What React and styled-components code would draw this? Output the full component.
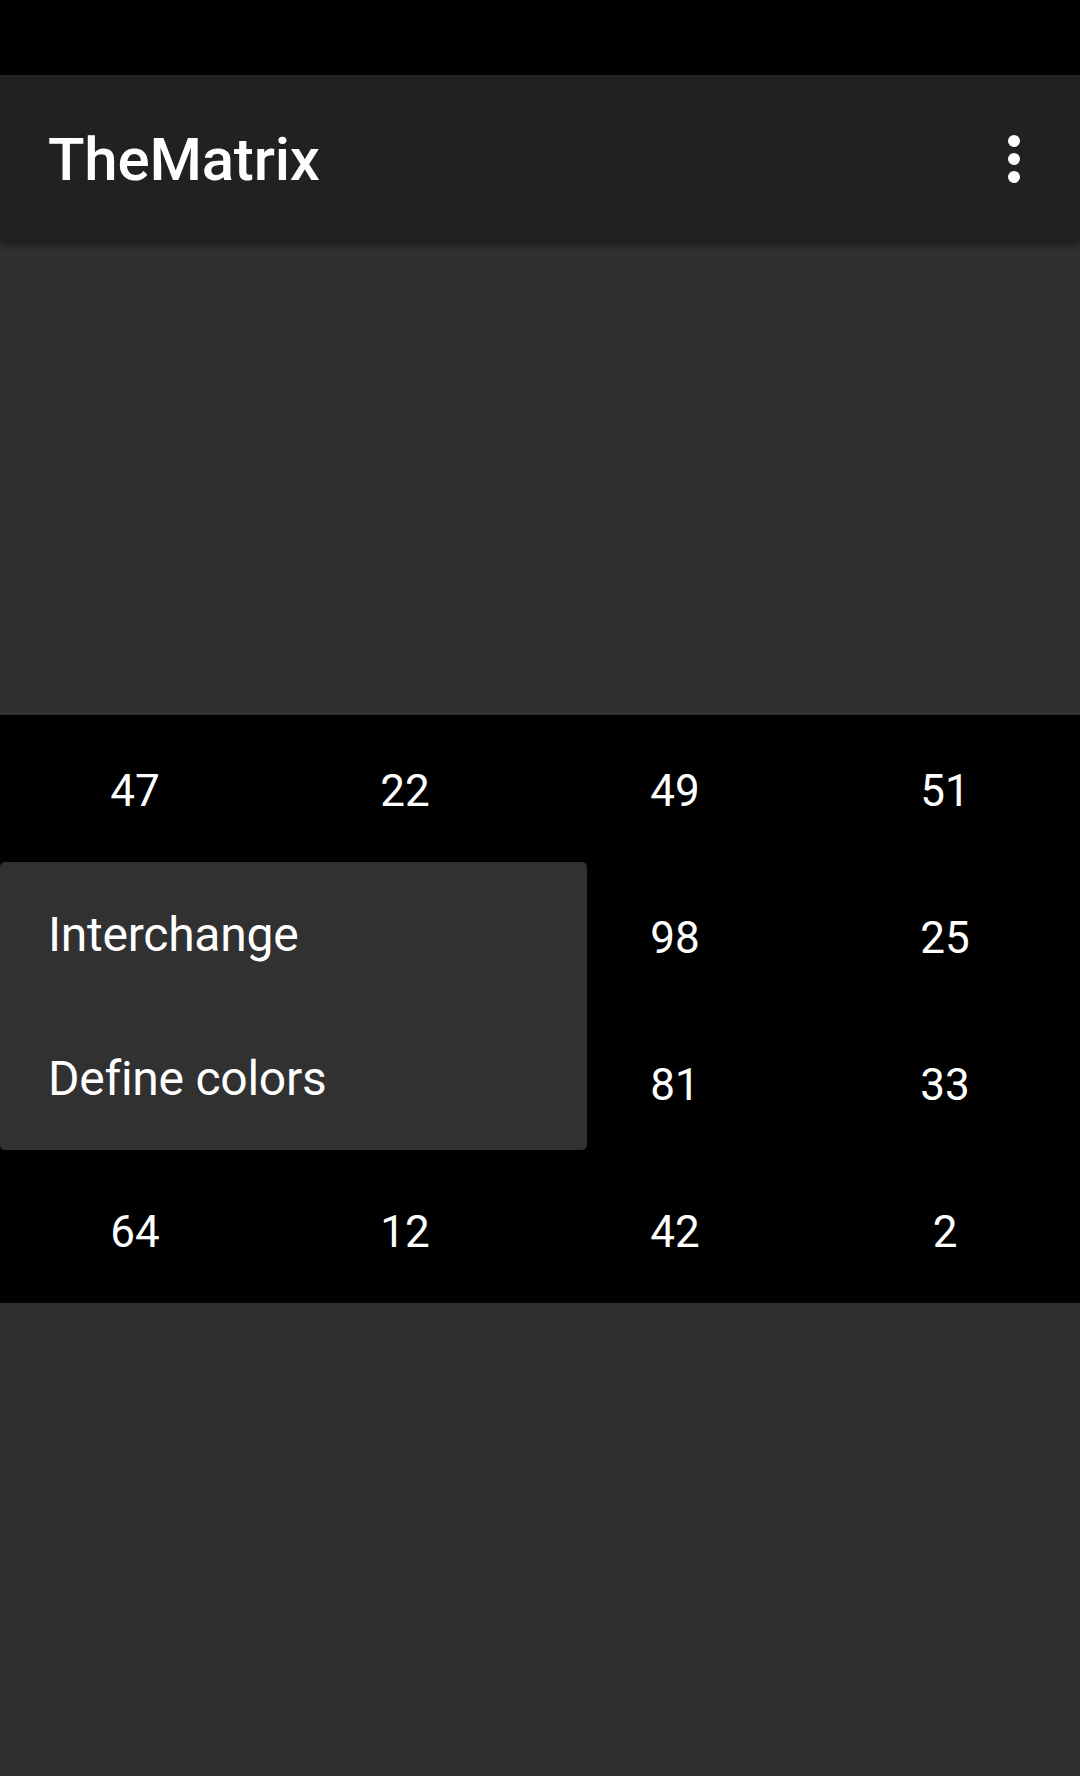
import React from "react";
import styled, { createGlobalStyle } from "styled-components";

const Global = createGlobalStyle`
  html, body { margin: 0; padding: 0; background: #303030; }
  body { font-family: Roboto, "Noto Sans", sans-serif; -webkit-font-smoothing: antialiased; }
  * { box-sizing: border-box; }
`;

const Screen = styled.div`
  width: 1080px;
  min-height: 1776px;
  background: #303030;
  display: flex;
  flex-direction: column;
`;

const StatusBar = styled.div`
  height: 75px;
  background: #000;
  flex: none;
`;

const Toolbar = styled.header`
  height: 168px;
  flex: none;
  background: #212121;
  display: flex;
  align-items: center;
  justify-content: space-between;
  padding: 0 30px 0 48px;
  position: relative;
  z-index: 2;
  box-shadow: 0 3px 6px rgba(0, 0, 0, 0.35);
`;

const Title = styled.h1`
  margin: 0;
  font-family: Roboto, sans-serif;
  font-weight: 500;
  font-size: 60px;
  color: #fff;
  letter-spacing: -0.2px;
`;

const IconButton = styled.button`
  width: 72px;
  height: 72px;
  padding: 0;
  border: none;
  background: transparent;
  display: flex;
  align-items: center;
  justify-content: center;
`;

const Spacer = styled.div`
  height: 472px;
  flex: none;
`;

const MatrixWrap = styled.div`
  position: relative;
  flex: none;
`;

const Matrix = styled.div`
  display: grid;
  grid-template-columns: repeat(4, 1fr);
  grid-auto-rows: 147px;
  background: #000;
`;

const Cell = styled.div`
  display: flex;
  align-items: center;
  justify-content: center;
  padding-top: 4px;
  color: #fff;
  font-family: Roboto, sans-serif;
  font-size: 44px;
  font-weight: 400;
`;

const Menu = styled.div`
  position: absolute;
  top: 147px;
  left: 0;
  width: 587px;
  background: #313131;
  border-radius: 5px;
  box-shadow: 0 4px 10px rgba(0, 0, 0, 0.5);
  display: flex;
  flex-direction: column;
`;

const MenuItem = styled.div`
  height: 144px;
  display: flex;
  align-items: center;
  padding: 0 48px;
  color: #fff;
  font-family: Roboto, sans-serif;
  font-size: 48px;
  font-weight: 400;
  letter-spacing: -0.25px;
`;

const values = [
  [47, 22, 49, 51],
  [null, null, 98, 25],
  [null, null, 81, 33],
  [64, 12, 42, 2],
];

const MoreVert = () => (
  <svg width="72" height="72" viewBox="0 0 24 24" fill="#fff">
    <circle cx="12" cy="6" r="2" />
    <circle cx="12" cy="12" r="2" />
    <circle cx="12" cy="18" r="2" />
  </svg>
);

export default function App() {
  return (
    <>
      <Global />
      <Screen>
        <StatusBar />
        <Toolbar>
          <Title>TheMatrix</Title>
          <IconButton aria-label="More options">
            <MoreVert />
          </IconButton>
        </Toolbar>
        <Spacer />
        <MatrixWrap>
          <Matrix>
            {values.flat().map((v, i) => (
              <Cell key={i}>{v}</Cell>
            ))}
          </Matrix>
          <Menu>
            <MenuItem>Interchange</MenuItem>
            <MenuItem>Define colors</MenuItem>
          </Menu>
        </MatrixWrap>
      </Screen>
    </>
  );
}
